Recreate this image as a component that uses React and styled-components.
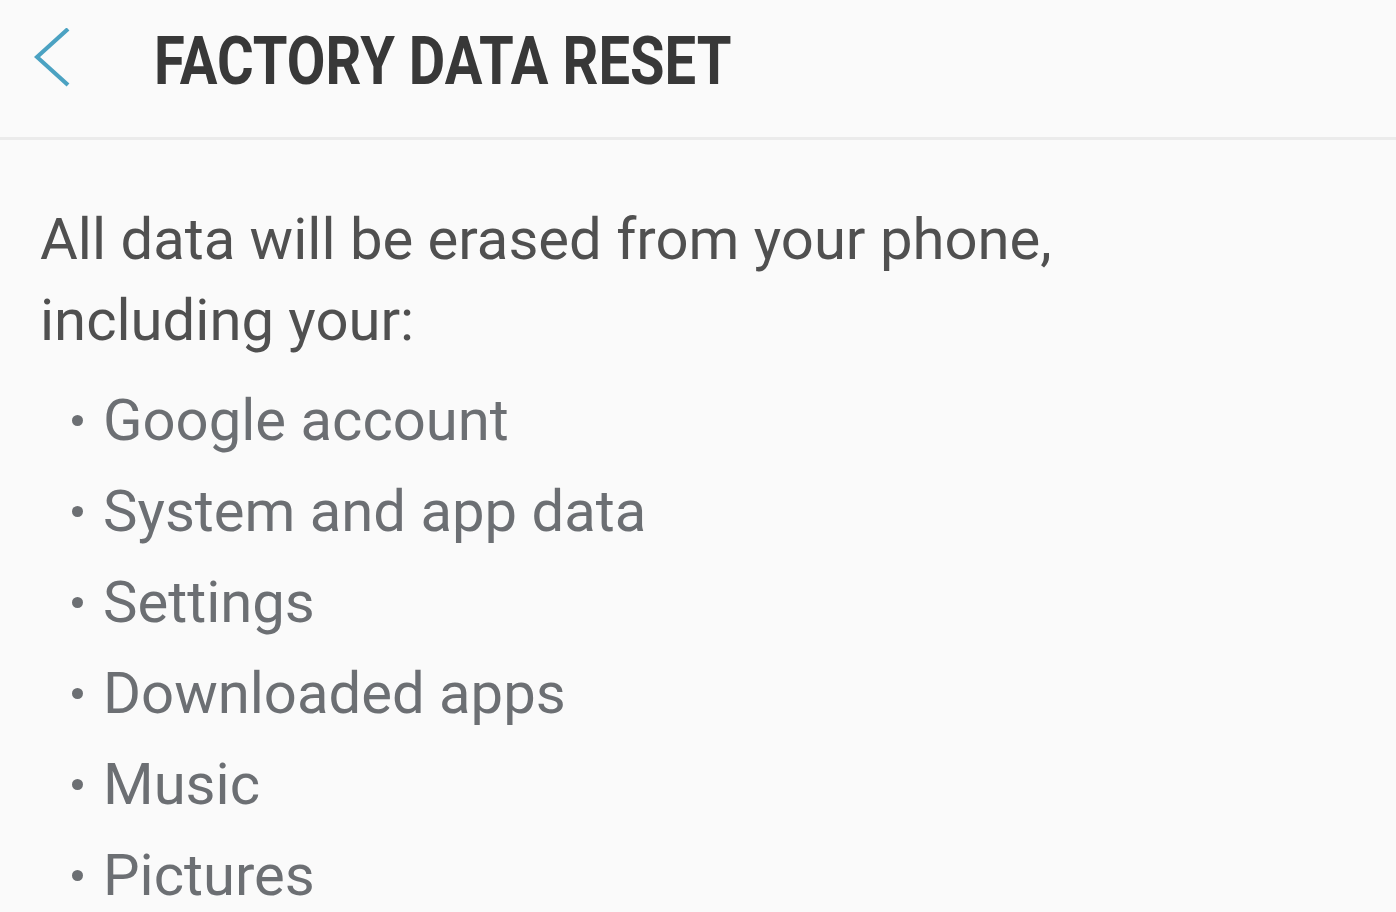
import React from 'react'
import styled, { createGlobalStyle } from 'styled-components'

const Global = createGlobalStyle`
  html, body {
    margin: 0;
    padding: 0;
    background: #fafafa;
  }
  body {
    font-family: Roboto, 'Noto Sans', sans-serif;
    overflow: hidden;
  }
`

const Page = styled.div`
  width: 1396px;
  height: 912px;
  background: #fafafa;
  overflow: hidden;
`

const Header = styled.header`
  display: flex;
  align-items: center;
  height: 115px;
  padding-bottom: 22px;
  border-bottom: 3px solid #ebebeb;
  box-sizing: content-box;
`

const BackButton = styled.button`
  display: flex;
  align-items: center;
  background: none;
  border: 0;
  padding: 0 0 0 34px;
  margin: 0;
  width: 154px;
  height: 100%;
  cursor: pointer;
`

const Title = styled.h1`
  margin: 0;
  font-family: Roboto, sans-serif;
  font-weight: 700;
  font-size: 66px;
  line-height: 1;
  color: #383838;
  white-space: nowrap;
  transform: scaleX(0.85);
  transform-origin: left center;
  margin-top: 8px;
`

const Body = styled.main`
  padding: 59px 0 0 40px;
`

const Intro = styled.p`
  margin: 0;
  font-size: 58px;
  line-height: 81px;
  color: #505050;
  width: 1100px;
`

const List = styled.ul`
  list-style: none;
  margin: 14px 0 0;
  padding: 0 0 0 30px;
`

const Item = styled.li`
  display: flex;
  align-items: center;
  font-size: 58px;
  line-height: 91px;
  color: #6c6f73;
  white-space: nowrap;

  &::before {
    content: '';
    width: 11px;
    height: 11px;
    border-radius: 50%;
    background: #6c6f73;
    margin: 0 20px 0 2px;
    flex-shrink: 0;
  }
`

const items = [
  'Google account',
  'System and app data',
  'Settings',
  'Downloaded apps',
  'Music',
  'Pictures'
]

const App = () => (
  <Page>
    <Global />
    <Header>
      <BackButton aria-label='Back'>
        <svg width='40' height='60' viewBox='0 0 40 60'>
          <polyline
            points='34,1 3,29 34,57'
            fill='none'
            stroke='#4ba2c2'
            strokeWidth='4.2'
            strokeLinecap='butt'
            strokeLinejoin='miter'
          />
        </svg>
      </BackButton>
      <Title>FACTORY DATA RESET</Title>
    </Header>
    <Body>
      <Intro>
        All data will be erased from your phone,
        <br />
        including your:
      </Intro>
      <List>
        {items.map(item => (
          <Item key={item}>{item}</Item>
        ))}
      </List>
    </Body>
  </Page>
)

export default App
